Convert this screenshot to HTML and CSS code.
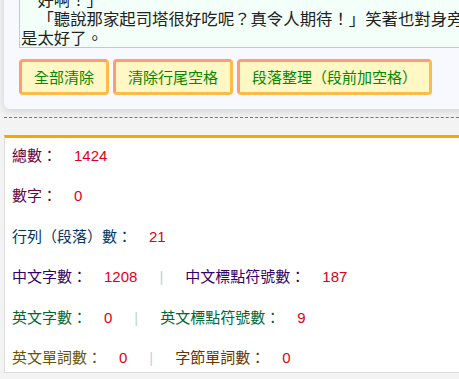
FILE: index.html
```html
<!DOCTYPE html>
<html lang="zh-Hant">
<head>
<meta charset="utf-8">
<title>字數統計</title>
<link rel="stylesheet" href="styles.css">
</head>
<body>
<div class="page">
  <section class="card">
    <div class="editor">
      <div class="line indent">好啊！」</div>
      <div class="line indent">「聽說那家起司塔很好吃呢？真令人期待！」笑著也對身旁的朋友說，能和大家一起來真</div>
      <div class="line">是太好了。</div>
    </div>
    <div class="actions">
      <button class="btn">全部清除</button>
      <button class="btn">清除行尾空格</button>
      <button class="btn">段落整理（段前加空格）</button>
    </div>
  </section>
  <hr class="divider">
  <section class="stats">
    <div class="row"><span class="label c-total">總數：</span><span class="num">1424</span></div>
    <div class="row"><span class="label c-total">數字：</span><span class="num">0</span></div>
    <div class="row"><span class="label c-lines">行列（段落）數：</span><span class="num">21</span></div>
    <div class="row"><span class="label c-zh">中文字數：</span><span class="num">1208</span><span class="sep">|</span><span class="label c-zh">中文標點符號數：</span><span class="num">187</span></div>
    <div class="row"><span class="label c-en">英文字數：</span><span class="num">0</span><span class="sep">|</span><span class="label c-en">英文標點符號數：</span><span class="num">9</span></div>
    <div class="row"><span class="label c-word">英文單詞數：</span><span class="num">0</span><span class="sep">|</span><span class="label c-byte">字節單詞數：</span><span class="num">0</span></div>
  </section>
</div>
</body>
</html>
```
FILE: styles.css
```css
body {
  margin: 0;
  overflow: hidden;
  background: #f3f3f3;
  font-family: "Liberation Sans", "Noto Sans CJK TC", sans-serif;
}

.page {
  margin: -21px -40px 0 4px;
}

.card {
  background: #f8f8ff;
  border-radius: 0 0 6px 6px;
  box-shadow: 0 2px 8px rgba(0, 0, 0, 0.14);
  padding: 10px 15px 14px;
}

.editor {
  border: 1px solid #e2e200;
  background: #f3fff9;
  color: #222;
  font-family: "Noto Sans CJK TC", sans-serif;
  font-size: 16.4px;
  line-height: 19px;
  padding: 0 1px;
  overflow: hidden;
  text-spacing-trim: space-all;
}

.line {
  white-space: pre;
}

.indent {
  text-indent: 1em;
}

.actions {
  display: flex;
  gap: 4px;
  margin-top: 11px;
}

.btn {
  font-family: "Noto Sans CJK TC", sans-serif;
  font-size: 15px;
  line-height: 18px;
  color: #008a00;
  background: #fff7c4;
  border: 3px solid;
  border-color: #ff9c72 #ffbb44 #ffbb44 #ff9c72;
  border-radius: 4px;
  padding: 6px 12px;
  margin: 0;
  text-spacing-trim: space-all;
}

.divider {
  margin: 8px 0 0;
  height: 0;
  border: 0;
  border-top: 1px dashed #66779a;
}

.stats {
  margin-top: 17px;
  background: #fff;
  border-top: 3px solid #f2a900;
  border-left: 1px solid #dcdcdc;
  border-bottom: 1px solid #dcdcdc;
  padding: 7px 8px 4px 7px;
  display: flex;
  flex-direction: column;
  gap: 19.4px;
  text-spacing-trim: space-all;
}

.row {
  display: flex;
  align-items: baseline;
  font-size: 15px;
  line-height: 20px;
  white-space: nowrap;
}

.label {
  font-family: "Noto Sans CJK TC", sans-serif;
}

.num {
  margin-left: 17px;
  color: #dd0018;
  font-family: "Liberation Sans", sans-serif;
}

.sep {
  margin: 0 22px;
  color: #c5cde0;
}

.c-total { color: #660040; }
.c-lines { color: #003366; }
.c-zh { color: #330066; }
.c-en { color: #006633; }
.c-word { color: #665500; }
.c-byte { color: #663300; }
```
